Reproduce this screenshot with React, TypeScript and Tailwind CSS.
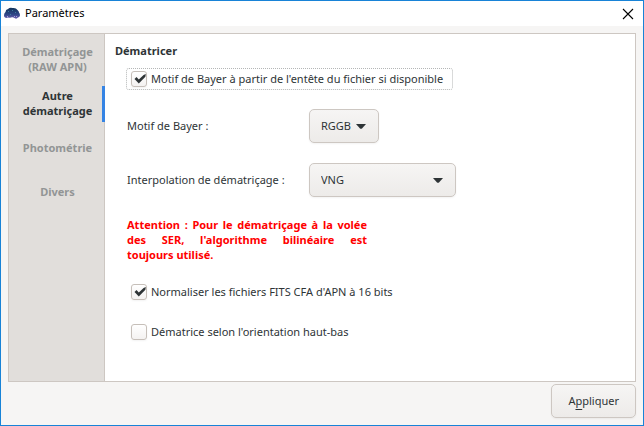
import React, { useState } from "react";
import { clsx } from "clsx";

const TABS = ["Dématriçage (RAW APN)", "Autre dématriçage", "Photométrie", "Divers"];

export default function App() {
  const [tab, setTab] = useState(1);

  return (
    <div className="flex min-h-screen flex-col border border-[#1883d7] bg-[#f6f5f4] font-['Noto_Sans','Open_Sans',sans-serif] text-[11px] leading-[15px] text-[#2e3436]">
      <header className="flex h-[25px] items-center justify-between bg-white pr-[9px] pl-[3px] text-black">
        <div className="flex items-center gap-[5px]">
          <AppLogo />
          <h1 className="pb-0.5">Paramètres</h1>
        </div>
        <button type="button" aria-label="Fermer">
          <svg width="12" height="12" viewBox="0 0 12 12" stroke="currentColor" strokeWidth="1.1">
            <path d="M1 1l10 10M11 1L1 11" />
          </svg>
        </button>
      </header>

      <div className="flex flex-1 flex-col px-[7px] pt-[7px] pb-[7px]">
        <div className="flex flex-1 border border-[#cdc7c2] bg-white">
          <nav className="flex w-24 shrink-0 flex-col gap-2 border-r border-[#cdc7c2] bg-[#e1dedb] py-2">
            {TABS.map((label, i) => (
              <button
                key={label}
                type="button"
                onClick={() => setTab(i)}
                className={clsx(
                  "-mr-px flex min-h-9 items-center justify-center border-r-[3px] pr-1 pb-0.5 pl-2 text-center font-bold",
                  i === tab ? "border-[#3584e4] text-[#2e3436]" : "border-transparent text-[#929595]"
                )}
              >
                {label}
              </button>
            ))}
          </nav>

          <main className="flex-1 px-[10px] pt-[9px]">
            <h2 className="font-bold">Dématricer</h2>

            <div className="flex flex-col items-start pt-[10px] pl-[11px]">
              <Check label="Motif de Bayer à partir de l'entête du fichier si disponible" defaultChecked focused />

              <div className="flex flex-col gap-5 pt-[19px] pl-px">
                <Dropdown id="bayer" label="Motif de Bayer :" options={["RGGB", "BGGR", "GBRG", "GRBG"]} width="w-[70px]" />
                <Dropdown id="interpolation" label="Interpolation de dématriçage :" options={["VNG", "AHD", "RCD"]} width="w-[147px]" />
              </div>

              <p className="mt-5 ml-px w-60 text-justify font-bold text-[#ff0000]">
                Attention : Pour le dématriçage à la volée des SER, l'algorithme bilinéaire est{" "}
                <span className="whitespace-nowrap">toujours utilisé.</span>
              </p>

              <div className="flex flex-col items-start gap-[18px] pt-[19px]">
                <Check label="Normaliser les fichiers FITS CFA d'APN à 16 bits" defaultChecked />
                <Check label="Dématrice selon l'orientation haut-bas" />
              </div>
            </div>
          </main>
        </div>

        <footer className="flex justify-end pt-[2px]">
          <button
            type="button"
            className="h-[34px] rounded-[5px] border border-[#cdc7c2] bg-linear-to-b from-[#f6f5f4] to-[#edebe9] px-4 pb-0.5 shadow-xs"
          >
            A<span className="underline underline-offset-4">p</span>pliquer
          </button>
        </footer>
      </div>
    </div>
  );
}

function Check({ label, defaultChecked, focused }: { label: string; defaultChecked?: boolean; focused?: boolean }) {
  return (
    <label
      className={clsx(
        "flex h-[22px] items-center gap-1 rounded-[3px] border pr-[9px] pl-1",
        focused ? "border-dotted border-[#b4b6b6]" : "border-transparent"
      )}
    >
      <span className="grid size-4 shrink-0 place-items-center">
        <input
          type="checkbox"
          defaultChecked={defaultChecked}
          className="peer col-start-1 row-start-1 size-4 appearance-none rounded-[3px] border border-[#c6bfb9] bg-linear-to-b from-white to-[#f4f2f1] shadow-xs outline-none"
        />
        <svg
          className="pointer-events-none invisible z-10 col-start-1 row-start-1 size-4 peer-checked:visible"
          viewBox="0 0 16 16"
          fill="#2e3436"
        >
          <path d="M3.500 8L5.500 6 7.800 8.400 12.600 4 14.800 3 14.400 5.700 7.800 12.500z" />
        </svg>
      </span>
      <span className="pb-0.5">{label}</span>
    </label>
  );
}

function Dropdown({ id, label, options, width }: { id: string; label: string; options: string[]; width: string }) {
  return (
    <div className="flex items-center">
      <label htmlFor={id} className="w-[182px] pb-0.5">{label}</label>
      <div className={clsx("relative", width)}>
        <select
          id={id}
          className="h-[34px] w-full appearance-none rounded-[5px] border border-[#cdc7c2] bg-linear-to-b from-[#f6f5f4] to-[#edebe9] pb-0.5 pl-[11px] shadow-xs outline-none"
        >
          {options.map((o) => (
            <option key={o}>{o}</option>
          ))}
        </select>
        <svg className="pointer-events-none absolute top-[15px] right-[13px]" width="10" height="5" viewBox="0 0 10 5" fill="#2e3436">
          <path d="M0 0h10L6 4.500Q5 5.200 4 4.500z" />
        </svg>
      </div>
    </div>
  );
}

function AppLogo() {
  return (
    <svg width="16" height="16" viewBox="0 0 16 16">
      <defs>
        <linearGradient id="sky" x1="0" y1="0" x2="0" y2="1">
          <stop offset="0" stopColor="#12345a" />
          <stop offset="0.6" stopColor="#2c4585" />
          <stop offset="1" stopColor="#6a5fae" />
        </linearGradient>
      </defs>
      <path
        d="M0 9.500Q0 7 1.500 6Q1.500 3.500 4 3Q6 1 8.500 2Q12 1.500 13.500 4Q15 5 15 6.500Q16 7.500 16 9.500Q15.500 11.500 14 11.500Q12.500 13.500 10.500 12Q9 11 7 11.500Q5.500 12 4 11.500Q2 12.300 1 11.500Q0 11 0 9.500z"
        fill="url(#sky)"
      />
      <path d="M4 5h1v1H4zM8 4h1v1H8zM11 6h1v1h-1zM6 8h1v1H6z" fill="#3f7fa0" />
      <path d="M10 10h1v1h-1zM12 10h1v1h-1zM3 10h1v1H3z" fill="#a99be0" />
    </svg>
  );
}
